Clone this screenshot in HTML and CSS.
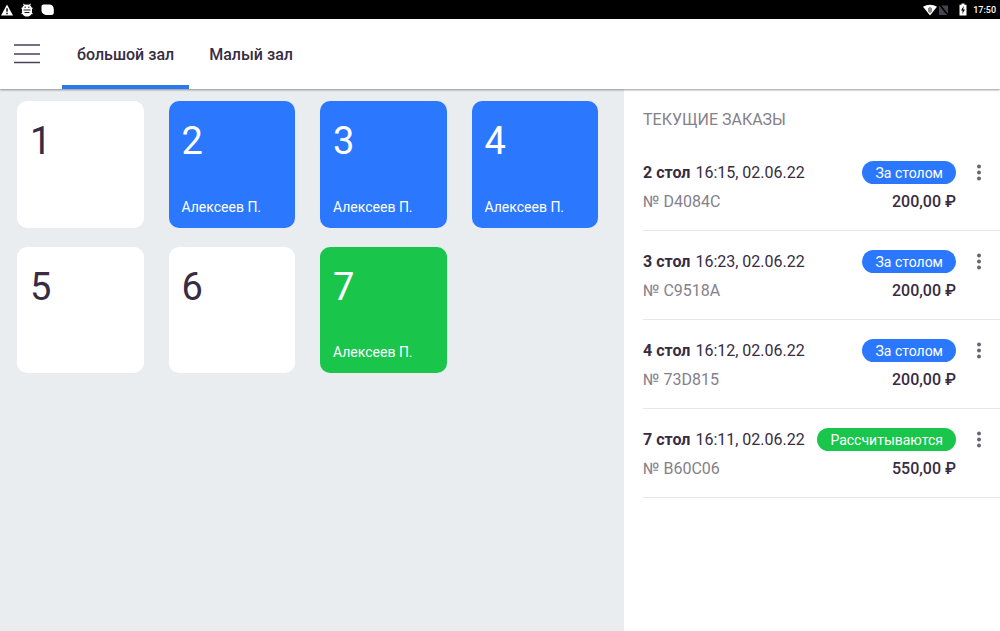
FILE: index.html
```html
<!DOCTYPE html>
<html lang="ru">
<head>
    <meta charset="UTF-8">
    <meta name="viewport" content="width=device-width, initial-scale=1.0">
    <title>Столы и заказы</title>
    <link rel="stylesheet" href="styles.css">
</head>
<body>
    <div class="status-bar">
        <div class="status-group">
            <svg width="12" height="12" viewBox="0 0 12 12"><path fill="#fff" d="M6 0.5 12 11.5H0z"/><path stroke="#000" stroke-width="1.4" d="M6 4.2v3.6M6 8.8v1.4"/></svg>
            <svg width="12" height="14" viewBox="0 0 12 14"><path stroke="#fff" stroke-width="1.1" d="M2.5 0.8 4 3M9.5 0.8 8 3M0.5 5 2 6M11.5 5 10 6M0.5 11 2 10M11.5 11 10 10"/><path fill="#fff" d="M6 1.6c3 0 5 1.8 5 4.8v2c0 3-2 5-5 5s-5-2-5-5v-2c0-3 2-4.8 5-4.8z"/><path fill="none" stroke="#000" stroke-width="0.9" d="M3.5 4.2h1.5M7 4.2h1.5M2.5 7h7M3.5 9.5h5"/></svg>
            <svg width="13" height="12" viewBox="0 0 13 12"><path fill="#fff" d="M2.5 0.5H8c3 0 4.8 1.8 4.8 4.8v3.2c0 1.700-0.8 2.500-2.500 2.500H6.500C2.800 11 0.500 9.200 0.500 6V2.500c0-1.200 0.800-2 2-2z"/></svg>
        </div>
        <div class="status-group status-right">
            <svg width="26" height="12" viewBox="0 0 26 12"><path fill="#fff" d="M0 2.800C4-0.100 10-0.100 14 2.800L7 11.500z"/><path fill="none" stroke="#000" stroke-width="0.900" d="M5.500 5 7 3.500 8.500 5M5.500 7 7 8.500 8.500 7M6 5v2M8 5v2"/><path fill="#48424f" d="M16 1.500v9.500h8zM18.500 1.500H25v8.500z"/></svg>
            <svg width="8" height="13" viewBox="0 0 8 13"><path fill="#fff" d="M2.500 0.500h3v1.300h2v10.700h-7V1.800h2z"/><path fill="#000" d="M4.700 3 2 7.500h1.700L3.300 11 6 6.500H4.300z"/></svg>
            <span class="clock">17:50</span>
        </div>
    </div>

    <header class="header">
        <button class="menu-btn" type="button" aria-label="Меню">
            <svg width="26" height="20" viewBox="0 0 26 20"><path stroke="#4c4159" stroke-width="1.5" d="M0 1h26M0 10h26M0 18.500h26"/></svg>
        </button>
        <nav class="tabs">
            <button class="tab active" type="button">большой зал</button>
            <button class="tab" type="button">Малый зал</button>
        </nav>
    </header>

    <main class="content">
        <section class="hall">
            <button class="table-card" type="button"><span class="number">1</span></button>
            <button class="table-card busy" type="button"><span class="number">2</span><span class="waiter">Алексеев П.</span></button>
            <button class="table-card busy" type="button"><span class="number">3</span><span class="waiter">Алексеев П.</span></button>
            <button class="table-card busy" type="button"><span class="number">4</span><span class="waiter">Алексеев П.</span></button>
            <button class="table-card" type="button"><span class="number">5</span></button>
            <button class="table-card" type="button"><span class="number">6</span></button>
            <button class="table-card paying" type="button"><span class="number">7</span><span class="waiter">Алексеев П.</span></button>
        </section>

        <aside class="orders">
            <h2 class="orders-title">ТЕКУЩИЕ ЗАКАЗЫ</h2>
            <ul class="order-list">
                <li class="order">
                    <div class="order-info">
                        <div class="order-row">
                            <span class="order-name"><b>2 стол</b>16:15, 02.06.22</span>
                            <span class="badge busy">За столом</span>
                        </div>
                        <div class="order-row">
                            <span class="order-id">№ D4084C</span>
                            <span class="price">200,00 ₽</span>
                        </div>
                    </div>
                    <button class="more-btn" type="button" aria-label="Действия">
                        <svg width="6" height="17" viewBox="0 0 6 17"><g fill="#6b6374"><circle cx="3" cy="2.5" r="2"/><circle cx="3" cy="8.5" r="2"/><circle cx="3" cy="14.5" r="2"/></g></svg>
                    </button>
                </li>
                <li class="order">
                    <div class="order-info">
                        <div class="order-row">
                            <span class="order-name"><b>3 стол</b>16:23, 02.06.22</span>
                            <span class="badge busy">За столом</span>
                        </div>
                        <div class="order-row">
                            <span class="order-id">№ C9518A</span>
                            <span class="price">200,00 ₽</span>
                        </div>
                    </div>
                    <button class="more-btn" type="button" aria-label="Действия">
                        <svg width="6" height="17" viewBox="0 0 6 17"><g fill="#6b6374"><circle cx="3" cy="2.5" r="2"/><circle cx="3" cy="8.5" r="2"/><circle cx="3" cy="14.5" r="2"/></g></svg>
                    </button>
                </li>
                <li class="order">
                    <div class="order-info">
                        <div class="order-row">
                            <span class="order-name"><b>4 стол</b>16:12, 02.06.22</span>
                            <span class="badge busy">За столом</span>
                        </div>
                        <div class="order-row">
                            <span class="order-id">№ 73D815</span>
                            <span class="price">200,00 ₽</span>
                        </div>
                    </div>
                    <button class="more-btn" type="button" aria-label="Действия">
                        <svg width="6" height="17" viewBox="0 0 6 17"><g fill="#6b6374"><circle cx="3" cy="2.5" r="2"/><circle cx="3" cy="8.5" r="2"/><circle cx="3" cy="14.5" r="2"/></g></svg>
                    </button>
                </li>
                <li class="order">
                    <div class="order-info">
                        <div class="order-row">
                            <span class="order-name"><b>7 стол</b>16:11, 02.06.22</span>
                            <span class="badge paying">Рассчитываются</span>
                        </div>
                        <div class="order-row">
                            <span class="order-id">№ B60C06</span>
                            <span class="price">550,00 ₽</span>
                        </div>
                    </div>
                    <button class="more-btn" type="button" aria-label="Действия">
                        <svg width="6" height="17" viewBox="0 0 6 17"><g fill="#6b6374"><circle cx="3" cy="2.5" r="2"/><circle cx="3" cy="8.5" r="2"/><circle cx="3" cy="14.5" r="2"/></g></svg>
                    </button>
                </li>
            </ul>
        </aside>
    </main>
</body>
</html>
```
FILE: styles.css
```css
* {
    box-sizing: border-box;
}
body {
    margin: 0;
    min-height: 100vh;
    display: flex;
    flex-direction: column;
    font-family: Roboto, sans-serif;
    font-size: 16px;
    color: #372c42;
    background-color: #e9edf0;
}
button {
    padding: 0;
    border: none;
    background: none;
    font: inherit;
    color: inherit;
    cursor: pointer;
}
svg {
    display: block;
}

/* status bar */
.status-bar {
    display: flex;
    justify-content: space-between;
    align-items: center;
    height: 19px;
    padding: 0 4px 0 1px;
    background-color: #000;
}
.status-group {
    display: flex;
    align-items: center;
    gap: 8px;
}
.status-right {
    gap: 10px;
}
.clock {
    margin-left: -4px;
    font-size: 9px;
    font-weight: 500;
    color: #fff;
}

/* header */
.header {
    position: relative;
    display: flex;
    height: 70px;
    padding-left: 14px;
    background-color: #fff;
    box-shadow: 0 1px 2px rgba(0, 0, 0, 0.4);
}
.menu-btn {
    margin-right: 22px;
}
.tabs {
    display: flex;
    gap: 5px;
}
.tab {
    padding: 4px 15px 0;
    border-bottom: 4px solid transparent;
    font-weight: 500;
}
.tab.active {
    border-bottom-color: #2b78f0;
}

/* hall */
.content {
    flex: 1;
    display: flex;
}
.hall {
    flex: 1;
    display: grid;
    grid-template-columns: repeat(4, 1fr);
    align-content: start;
    gap: 19px 25px;
    padding: 12px 26px 12px 17px;
}
.table-card {
    display: flex;
    flex-direction: column;
    justify-content: space-between;
    aspect-ratio: 1;
    padding: 18px 13px 12px;
    border-radius: 10px;
    background-color: #fff;
    text-align: left;
}
.busy {
    background-color: #2b78ff;
    color: #fff;
}
.paying {
    background-color: #19c54b;
    color: #fff;
}
.number {
    font-size: 38px;
    line-height: 44px;
}
.waiter {
    font-size: 14px;
    line-height: 18px;
}

/* orders */
.orders {
    flex: 0 0 376px;
    padding: 21px 0 0 19px;
    background-color: #fff;
}
.orders-title {
    margin: 0 0 12px;
    font-size: 16px;
    font-weight: 400;
    line-height: 20px;
    color: #85808c;
}
.order-list {
    margin: 0;
    padding: 0;
    list-style: none;
}
.order {
    display: flex;
    align-items: flex-start;
    padding: 19px 18px 16px 0;
    border-bottom: 1px solid #e6e6e8;
}
.order-info {
    flex: 1;
    display: flex;
    flex-direction: column;
    gap: 5px;
}
.order-row {
    display: flex;
    justify-content: space-between;
    align-items: flex-start;
    line-height: 24px;
}
.order-name b {
    margin-right: 5px;
    font-weight: 700;
}
.order-id {
    color: #85808c;
}
.price {
    font-weight: 500;
}
.badge {
    padding: 1px 13px 0;
    border-radius: 12px;
    font-size: 14px;
    line-height: 22px;
}
.more-btn {
    margin: 3px 18px 0 20px;
    margin-right: 0;
}
```
